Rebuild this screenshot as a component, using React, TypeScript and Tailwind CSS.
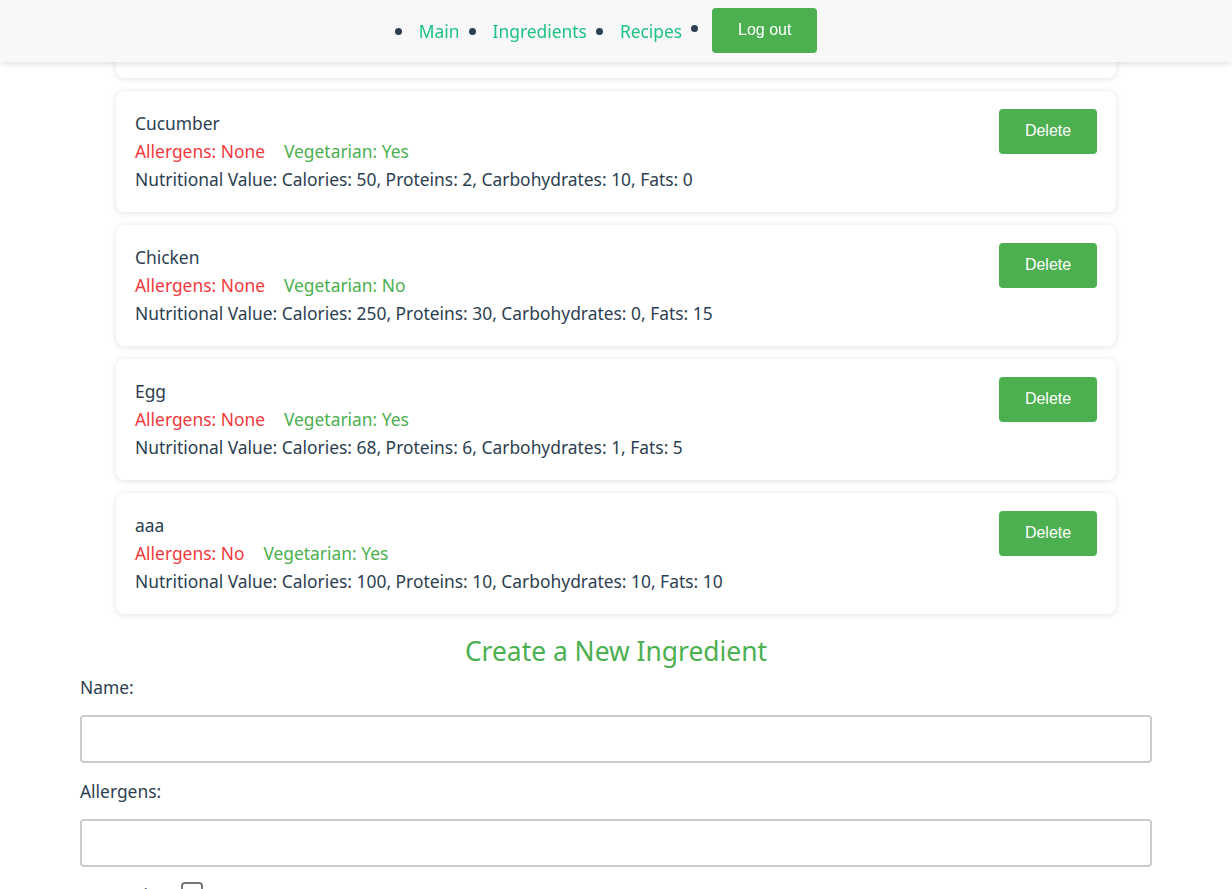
import { useState } from 'react'

type Ingredient = {
  id: number
  name: string
  allergens: string
  vegetarian: boolean
  calories: number
  proteins: number
  carbohydrates: number
  fats: number
}

const ingredients: Ingredient[] = [
  { id: 1, name: 'Tomato', allergens: 'None', vegetarian: true, calories: 20, proteins: 1, carbohydrates: 4, fats: 0 },
  { id: 2, name: 'Cucumber', allergens: 'None', vegetarian: true, calories: 50, proteins: 2, carbohydrates: 10, fats: 0 },
  { id: 3, name: 'Chicken', allergens: 'None', vegetarian: false, calories: 250, proteins: 30, carbohydrates: 0, fats: 15 },
  { id: 4, name: 'Egg', allergens: 'None', vegetarian: true, calories: 68, proteins: 6, carbohydrates: 1, fats: 5 },
  { id: 5, name: 'aaa', allergens: 'No', vegetarian: true, calories: 100, proteins: 10, carbohydrates: 10, fats: 10 },
]

const NavBar = () => {
  const links = ['Main', 'Ingredients', 'Recipes']

  return (
    <nav className="fixed inset-x-0 top-0 z-10 flex h-[62px] justify-center bg-[#f8f8f8] shadow-[0_2px_6px_rgba(0,0,0,0.12)]">
      <ul className="ml-[-20px] flex items-start pt-[8px]">
        {links.map((link) => (
          <li key={link} className="flex h-[45px] items-center">
            <span className="mt-[2px] h-[7px] w-[7px] rounded-full bg-[#2c3e50]" />
            <a href="#" className="ml-[17px] mr-[9px] mt-[2px] text-[17.4px] leading-[27px] text-[#1cc282]">
              {link}
            </a>
          </li>
        ))}
        <li className="flex h-[45px] items-center">
          <span className="mb-[4px] h-[7px] w-[7px] rounded-full bg-[#2c3e50]" />
          <button className="ml-[14px] h-[45px] w-[105px] rounded-[4px] bg-[#4caf50] pb-[2px] font-['Liberation_Sans',Arial,sans-serif] text-[16px] text-white">
            Log out
          </button>
        </li>
      </ul>
    </nav>
  )
}

const IngredientCard = ({ item }: { item: Ingredient }) => (
  <div className="flex w-[1000px] items-start justify-between rounded-lg bg-white pb-[19px] pl-[19px] pr-[19px] pt-[18px] shadow-[0_1px_6px_rgba(0,0,0,0.12)]">
    <div className="text-[17.4px] leading-[28px]">
      <p>{item.name}</p>
      <p>
        <span className="text-[#f2383d]">Allergens: {item.allergens}</span>
        <span className="ml-[19px] text-[#4caf50]">Vegetarian: {item.vegetarian ? 'Yes' : 'No'}</span>
      </p>
      <p>
        Nutritional Value: Calories: {item.calories}, Proteins: {item.proteins}, Carbohydrates: {item.carbohydrates}, Fats:{' '}
        {item.fats}
      </p>
    </div>
    <button className="h-[45px] w-[98px] rounded-[4px] bg-[#4caf50] pb-[2px] font-['Liberation_Sans',Arial,sans-serif] text-[16px] text-white">
      Delete
    </button>
  </div>
)

const App = () => {
  const [name, setName] = useState('')
  const [allergens, setAllergens] = useState('')
  const [vegetarian, setVegetarian] = useState(false)

  return (
    <div className="min-h-screen bg-white font-['Noto_Sans','Open_Sans',sans-serif] text-[#2c3e50]">
      <NavBar />

      <main className="mt-[-43px] pb-10">
        <div className="flex flex-col items-center gap-[13px]">
          {ingredients.map((item) => (
            <IngredientCard key={item.id} item={item} />
          ))}
        </div>

        <h2 className="mb-[4px] mt-[18px] text-center text-[26.4px] leading-[38px] text-[#4caf50]">
          Create a New Ingredient
        </h2>

        <form className="px-[80px] text-[17.4px] leading-[27px]" onSubmit={(e) => e.preventDefault()}>
          <div className="mb-[15px]">
            <label htmlFor="name" className="mb-[14px] block">
              Name:
            </label>
            <input
              id="name"
              value={name}
              onChange={(e) => setName(e.target.value)}
              className="block h-[48px] w-full rounded-[4px] border-2 border-[#cccccc] px-3 outline-none"
            />
          </div>
          <div className="mb-[15px]">
            <label htmlFor="allergens" className="mb-[14px] block">
              Allergens:
            </label>
            <input
              id="allergens"
              value={allergens}
              onChange={(e) => setAllergens(e.target.value)}
              className="block h-[48px] w-full rounded-[4px] border-2 border-[#cccccc] px-3 outline-none"
            />
          </div>
          <div className="flex items-start">
            <label htmlFor="vegetarian" className="w-[101px]">
              Vegetarian:
            </label>
            <input
              id="vegetarian"
              type="checkbox"
              checked={vegetarian}
              onChange={(e) => setVegetarian(e.target.checked)}
              className="h-[22px] w-[22px] appearance-none rounded-[4px] border-2 border-[#767676] bg-white"
            />
          </div>
        </form>
      </main>
    </div>
  )
}

export default App
